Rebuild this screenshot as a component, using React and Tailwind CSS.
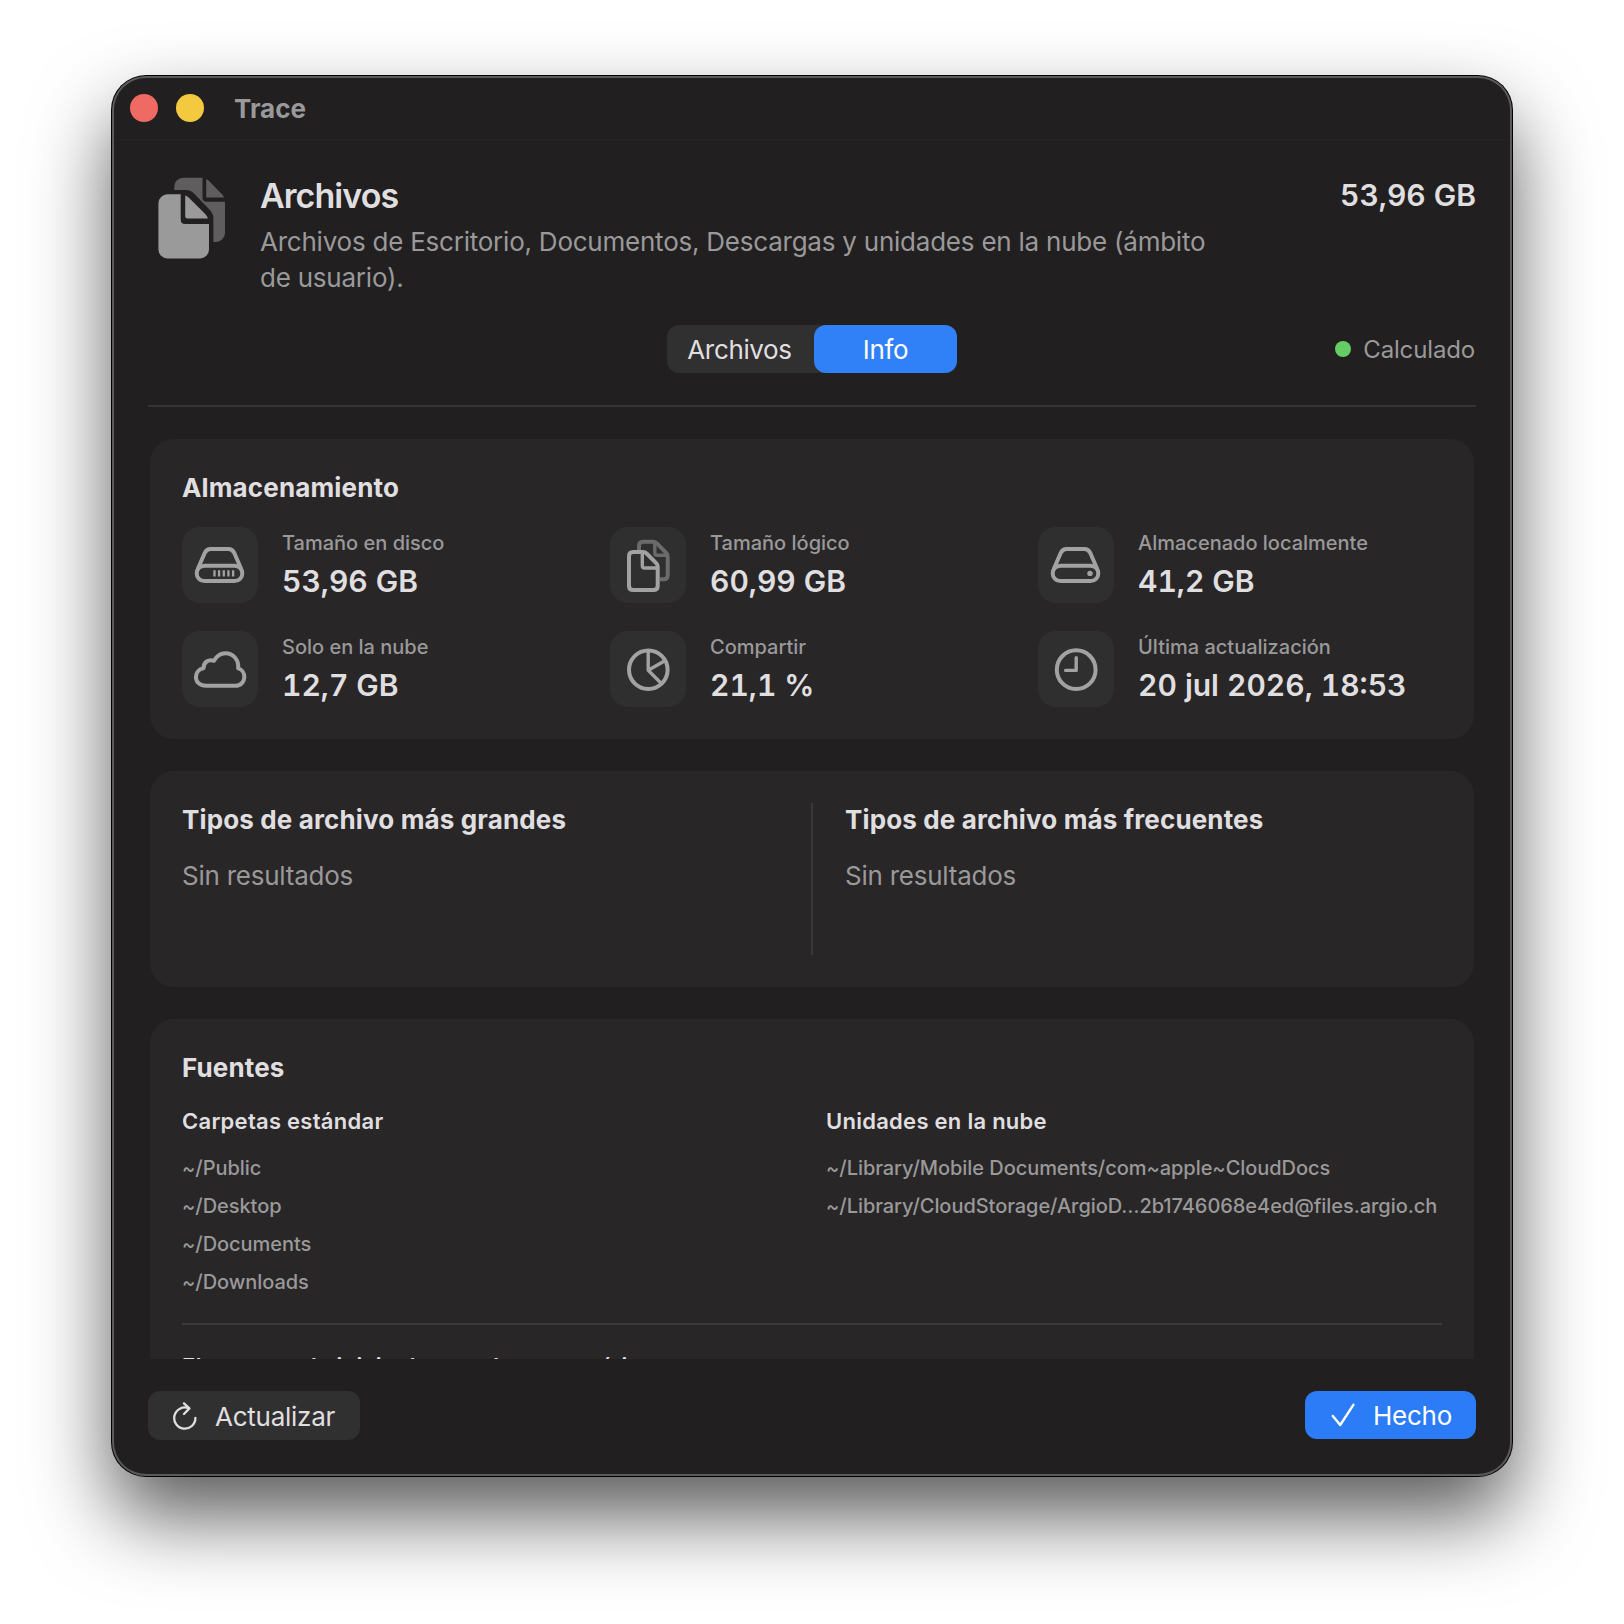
import React, { useState } from "react";

const DriveShape = () => (
  <>
    <path d="M15.8 42 L22.8 25.8 Q24.6 22 28.6 22 H46.4 Q50.4 22 52.2 25.8 L59.2 42" />
    <rect x="14.7" y="38.7" width="45.6" height="15.4" rx="7.7" />
  </>
);

const icons = {
  internalDrive: (
    <>
      <DriveShape />
      <path d="M32.5 43.2 V49.6 M37.1 43.2 V49.6 M41.8 43.2 V49.6 M46.4 43.2 V49.6 M51.1 43.2 V49.6" strokeWidth="2.3" strokeLinecap="butt" />
    </>
  ),
  documents: (
    <>
      <g stroke="#6c6b6c">
        <path d="M29 23 V19 Q29 14.7 33.3 14.7 H43 Q45 14.7 46.6 16.2 L56.2 25.8 Q57.7 27.4 57.7 29.4 V48 Q57.7 52.3 53.4 52.3 H50" strokeLinecap="butt" />
        <path d="M44.8 16 V26 Q44.8 28.3 47.1 28.3 H57" strokeWidth="3.4" />
      </g>
      <path d="M19 29.3 Q19 25 23.3 25 H33 Q35 25 36.6 26.5 L46.2 36.2 Q47.7 37.8 47.7 39.8 V58.7 Q47.7 63 43.4 63 H23.3 Q19 63 19 58.7 Z" />
      <path d="M32.3 26 V38.7 Q32.3 41 34.6 41 H47" strokeWidth="3.4" />
    </>
  ),
  externalDrive: (
    <>
      <DriveShape />
      <circle cx="52" cy="46.4" r="2.7" fill="#a3a2a3" stroke="none" />
    </>
  ),
  cloud: (
    <path d="M24 54.8 C18 54.8 13.9 51 13.9 46 C13.9 41.5 17 38 21.5 37.2 C21.5 31 26.5 28 32 29.8 C34.5 25 38.5 22.2 43.5 22.2 C51 22.2 57 28.5 56.2 37.4 C60 38.4 62.3 42 62.3 45.8 C62.3 51 58.5 54.8 53.5 54.8 Z" />
  ),
  pie: (
    <>
      <circle cx="38.3" cy="38.8" r="19.3" />
      <path d="M38.2 20 V39.2 L54.4 30 M38.2 39.2 L51.2 52.4" strokeWidth="3.4" />
    </>
  ),
  clock: (
    <>
      <circle cx="38.2" cy="38.7" r="19.4" />
      <path d="M38.2 26.6 V39.4 H27.6" strokeWidth="3.4" />
    </>
  ),
};

const stats = [
  { icon: "internalDrive", label: "Tamaño en disco", value: "53,96 GB" },
  { icon: "documents", label: "Tamaño lógico", value: "60,99 GB" },
  { icon: "externalDrive", label: "Almacenado localmente", value: "41,2 GB" },
  { icon: "cloud", label: "Solo en la nube", value: "12,7 GB" },
  { icon: "pie", label: "Compartir", value: "21,1 %" },
  { icon: "clock", label: "Última actualización", value: "20 jul 2026, 18:53" },
];

const sources = [
  {
    title: "Carpetas estándar",
    paths: ["~/Public", "~/Desktop", "~/Documents", "~/Downloads"],
  },
  {
    title: "Unidades en la nube",
    paths: [
      "~/Library/Mobile Documents/com~apple~CloudDocs",
      "~/Library/CloudStorage/ArgioD…2b1746068e4ed@files.argio.ch",
    ],
  },
];

const FilesIcon = () => (
  <svg width="72" height="86" viewBox="0 0 72 86" className="shrink-0">
    <g fill="#5f5d5e">
      <path d="M18.3 13.9 V10.7 a9 9 0 0 1 9 -9 H46.5 V21.5 q0 4.2 4.2 4.2 H69 V57 a9 9 0 0 1 -9 9 H57.4 V43 c0 -4 -1 -6.5 -4 -9.5 L38 17.5 c-3 -3 -5 -3.6 -8 -3.6 Z" />
      <path d="M50.2 3 Q51.5 3.6 53 5 L66 18.3 Q67.6 20 68 21.4 H50.2 Z" />
    </g>
    <g fill="#9b9a9b">
      <path d="M2.4 27.3 a9 9 0 0 1 9 -9 H24.7 V43.4 q0 4.6 4.6 4.6 H53 V73.4 a9 9 0 0 1 -9 9 H11.4 a9 9 0 0 1 -9 -9 Z" />
      <path d="M29.2 19.4 Q31 20 32.6 21.6 L49 37.8 Q51.4 40.4 52 42.4 H31 Q29.2 42.4 29.2 40.6 Z" />
    </g>
  </svg>
);

const Card = ({ children }) => (
  <section className="mx-0.5 rounded-3xl bg-[#282627] p-8">{children}</section>
);

const Heading = ({ children }) => (
  <h2 className="text-[26px] leading-[34px] font-bold tracking-[0.14px]">{children}</h2>
);

const Stat = ({ icon, label, value }) => (
  <div className="flex gap-6">
    <div className="h-[76px] w-[76px] shrink-0 rounded-[18px] bg-[#302f30]">
      <svg
        width="76"
        height="76"
        viewBox="0 0 76 76"
        fill="none"
        stroke="#a3a2a3"
        strokeWidth="4"
        strokeLinecap="round"
        strokeLinejoin="round"
      >
        {icons[icon]}
      </svg>
    </div>
    <div className="flex flex-col gap-1.5 pt-1 whitespace-nowrap">
      <span className="text-[20px] leading-6 font-medium text-[#9a999a]">{label}</span>
      <span className="text-[30px] leading-10 font-semibold tabular-nums">{value}</span>
    </div>
  </div>
);

const App = () => {
  const [tab, setTab] = useState("Info");

  return (
    <main className="h-[1624px] w-[1624px] overflow-hidden bg-white px-28 pt-[76px] font-[Inter,sans-serif] text-[#e0dfe0]">
      <div className="flex h-[1400px] flex-col rounded-[34px] bg-[#211f20] shadow-[0_0_0_1px_#000,0_40px_80px_rgba(0,0,0,0.65)] ring-2 ring-[#5a5a5a] ring-inset">
        {/* Title bar */}
        <header className="mx-0.5 flex h-16 shrink-0 items-center border-b border-[#252324] pl-4">
          <span className="h-7 w-7 rounded-full bg-[#ee6a62]"></span>
          <span className="ml-[18px] h-7 w-7 rounded-full bg-[#f3c940]"></span>
          <span className="ml-[30px] pt-0.5 text-[26px] leading-8 font-bold text-[#9a999a]">Trace</span>
        </header>

        <div className="flex flex-col px-9 pt-9">
          <div className="flex">
            <div className="ml-2">
              <FilesIcon />
            </div>
            <div className="ml-8 w-[960px]">
              <h1 className="text-[34px] leading-10 font-semibold tracking-[-0.95px]">Archivos</h1>
              <p className="mt-2 text-[26px] leading-9 tracking-[-0.23px] text-[#9a999a]">
                Archivos de Escritorio, Documentos, Descargas y unidades en la nube (ámbito de usuario).
              </p>
            </div>
            <span className="ml-auto text-[30px] leading-[38px] font-semibold whitespace-nowrap tabular-nums">53,96 GB</span>
          </div>

          <div className="mt-[29px] grid h-12 grid-cols-[1fr_290px_1fr] items-center">
            <div className="col-start-2 flex h-12 rounded-xl bg-[#303030] text-[26px] tracking-[-0.35px]">
              {["Archivos", "Info"].map((name) => (
                <button
                  key={name}
                  onClick={() => setTab(name)}
                  className={
                    tab === name
                      ? "w-[143px] rounded-xl bg-[#3080f8] pt-px text-white"
                      : "w-[147px] rounded-xl pt-px pr-0.5"
                  }
                >
                  {name}
                </button>
              ))}
            </div>
            <div className="flex items-center justify-end gap-3 pr-px text-[24px] tracking-[-0.15px] text-[#9a999a]">
              <span className="h-4 w-4 rounded-full bg-[#66cd65]"></span>
              <span className="pt-0.5">Calculado</span>
            </div>
          </div>

          <div className="mt-8 h-0.5 bg-[#363536]"></div>

          {/* Scrolling cards */}
          <div className="mt-8 flex h-[920px] flex-col gap-8 overflow-hidden">
            <Card>
              <Heading>Almacenamiento</Heading>
              <div className="mt-[22px] grid grid-cols-3 gap-x-6 gap-y-7">
                {stats.map((stat) => (
                  <Stat key={stat.label} {...stat} />
                ))}
              </div>
            </Card>

            <Card>
              <div className="flex h-[152px] gap-8">
                <div className="flex-1">
                  <Heading>Tipos de archivo más grandes</Heading>
                  <p className="mt-[23px] text-[26px] leading-8 tracking-[-0.24px] text-[#9a999a]">Sin resultados</p>
                </div>
                <div className="w-0.5 bg-[#3a393a]"></div>
                <div className="flex-1">
                  <Heading>Tipos de archivo más frecuentes</Heading>
                  <p className="mt-[23px] text-[26px] leading-8 tracking-[-0.24px] text-[#9a999a]">Sin resultados</p>
                </div>
              </div>
            </Card>

            <Card>
              <Heading>Fuentes</Heading>
              <div className="mt-[22px] grid grid-cols-2 gap-7">
                {sources.map((source) => (
                  <div key={source.title}>
                    <h3 className="text-[22px] leading-7 font-semibold tracking-[0.27px]">{source.title}</h3>
                    <ul className="mt-3.5 text-[20px] leading-[38px] font-medium tracking-[-0.05px] whitespace-nowrap text-[#9a999a]">
                      {source.paths.map((path) => (
                        <li key={path}>{path}</li>
                      ))}
                    </ul>
                  </div>
                ))}
              </div>
              <div className="mt-[22px] h-0.5 bg-[#3a393a]"></div>
              <h3 className="mt-[27px] text-[22px] leading-7 font-semibold tracking-[0.4px]">
                Elementos de inicio detectados automáticamente
              </h3>
            </Card>
          </div>

          {/* Footer */}
          <footer className="mt-8 flex items-start justify-between text-[26px] tracking-[-0.26px]">
            <button className="flex h-[49px] w-[212px] items-center rounded-xl bg-[#303030] pl-[25px]">
              <svg width="24" height="28" viewBox="0 0 24 28" fill="none" stroke="#e0dfe0" strokeWidth="2.3" strokeLinecap="round" strokeLinejoin="round">
                <path d="M15.6 6.2 A10.6 10.6 0 1 0 22.4 16" />
                <path d="M11 1.4 L16.4 6.4 L11 12" />
              </svg>
              <span className="ml-[18px] pt-px">Actualizar</span>
            </button>
            <button className="flex h-12 w-[171px] items-center rounded-xl bg-[#2b7cf6] pl-[26px] text-white">
              <svg width="24" height="24" viewBox="0 0 24 24" fill="none" stroke="currentColor" strokeWidth="2.4" strokeLinecap="round" strokeLinejoin="round">
                <path d="M1.8 13 L9.2 22 L22.4 1.8" />
              </svg>
              <span className="ml-[18px]">Hecho</span>
            </button>
          </footer>
        </div>
      </div>
    </main>
  );
};

export default App;
